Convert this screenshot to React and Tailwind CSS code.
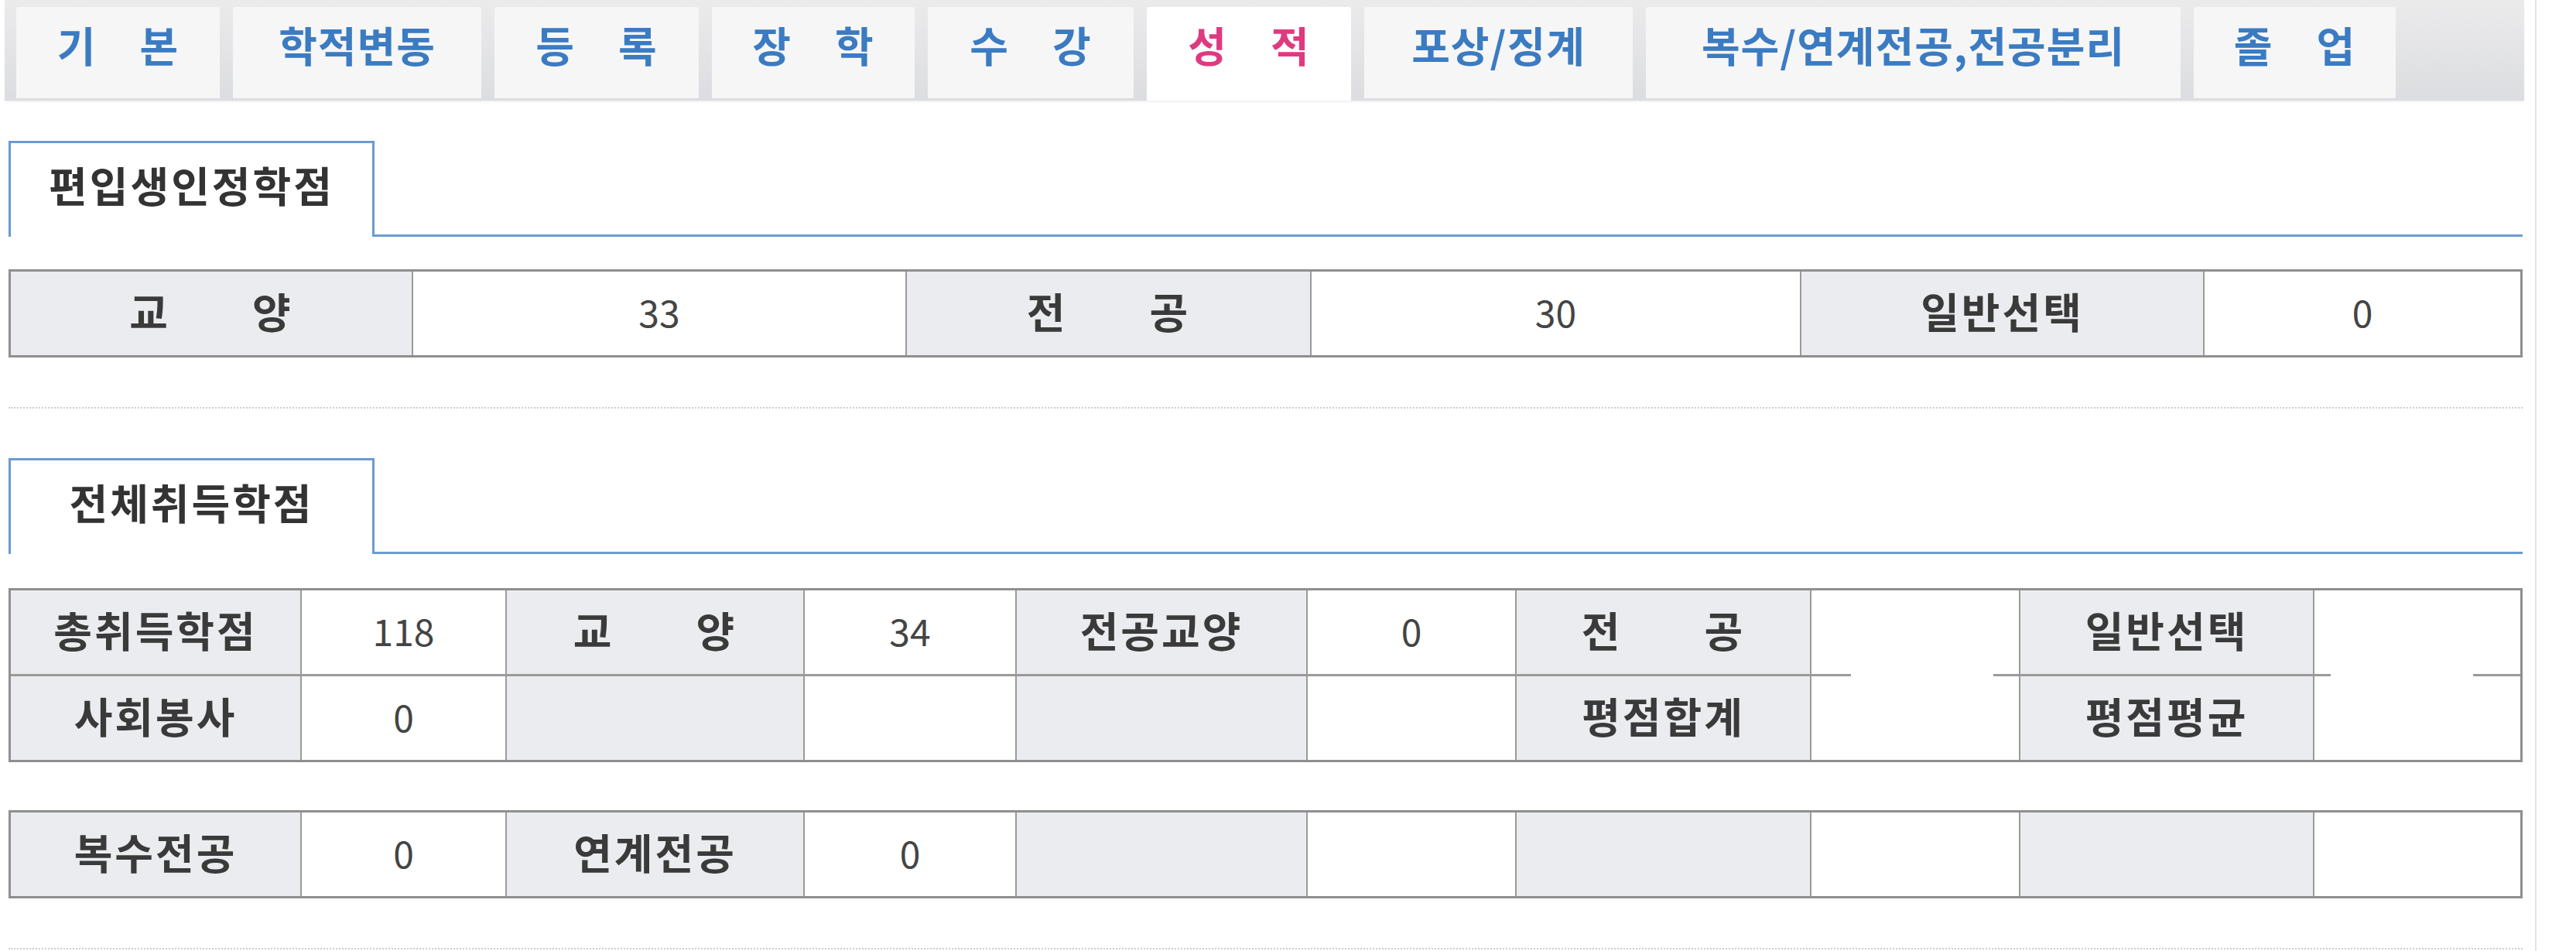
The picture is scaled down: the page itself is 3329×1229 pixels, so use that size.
import React from "react";

// 상단 탭 목록
const tabs = [
  { chars: ["기", "본"], w: "w-[263px]" },
  { chars: ["학적변동"], w: "w-[321px]" },
  { chars: ["등", "록"], w: "w-[264px]" },
  { chars: ["장", "학"], w: "w-[262px]" },
  { chars: ["수", "강"], w: "w-[266px]" },
  { chars: ["성", "적"], w: "w-[264px]", active: true },
  { chars: ["포상/징계"], w: "w-[347px]" },
  { chars: ["복수/연계전공,전공분리"], w: "w-[691px]" },
  { chars: ["졸", "업"], w: "w-[261px]" },
];

function Tab({ chars, w, active }) {
  return (
    <div
      className={`${w} flex shrink-0 justify-center gap-[56px] rounded-t-[3px] pt-[22px] text-[54px] font-bold leading-none tracking-[1px] ${
        active ? "h-[121px] bg-white text-[#de3a80]" : "h-[118px] bg-[#f6f6f6] text-[#3b7bc2]"
      }`}
    >
      {chars.map((c, i) => (
        <span key={i}>{c}</span>
      ))}
    </div>
  );
}

// 섹션 제목 (파란 테두리 탭)
function SectionTitle({ children }) {
  return (
    <div className="flex items-end">
      <div className="flex h-[124px] w-[473px] items-center justify-center border-x-[3px] border-t-[3px] border-[#6b9bd1] bg-white pb-[14px] text-[54px] font-bold leading-none tracking-[3px] text-[#333]">
        {children}
      </div>
      <div className="flex-1 border-b-[3px] border-[#6b9bd1]" />
    </div>
  );
}

function Head({ children, spaced }) {
  return (
    <div className="flex items-center justify-center bg-[#ebecef] pb-[6px] text-[54px] font-bold leading-none tracking-[3px] text-[#3a3a3a]">
      {spaced ? (
        <div className="flex gap-[106px]">
          {children.split(" ").map((c, i) => (
            <span key={i}>{c}</span>
          ))}
        </div>
      ) : (
        children
      )}
    </div>
  );
}

function Val({ children }) {
  return (
    <div className="flex items-center justify-center bg-white pb-[6px] text-[48px] leading-none text-[#444]">
      {children}
    </div>
  );
}

// 두 줄을 차지하는 빈 칸 (가운데 구분선이 일부만 보임)
function SplitCell({ left }) {
  return (
    <div className="row-span-2 flex flex-col bg-white">
      <div className="h-[108px]" />
      <div className="flex h-[3px]">
        <div className={`${left} h-full bg-[#9a9a9a]`} />
        <div className="h-full w-[184px] bg-white" />
        <div className="h-full flex-1 bg-[#9a9a9a]" />
      </div>
      <div className="flex-1" />
    </div>
  );
}

const grid10 =
  "grid grid-cols-[374px_263px_383px_272px_374px_268px_379px_268px_378px_266px] gap-x-[2px] gap-y-[3px] border-[3px] border-[#8f8f8f] bg-[#9a9a9a]";

export default function App() {
  return (
    <div className="min-h-[1229px] w-[3329px] bg-white font-['Noto_Sans_CJK_KR','Noto_Sans',sans-serif]">
      <div className="min-h-[1229px] w-[3278px] border-r-2 border-[#e3e3e3] pl-[6px] pr-[14px]">
        {/* 상단 탭바 */}
        <nav className="flex h-[130px] items-start gap-[17px] bg-linear-to-b from-[#ebebec] to-[#dcdde0] pl-[15px] pt-[9px] shadow-[0_2px_2px_rgba(0,0,0,0.06)]">
          {tabs.map((t, i) => (
            <Tab key={i} {...t} />
          ))}
        </nav>

        <div className="pl-[5px] pr-[2px]">
          {/* 편입생인정학점 */}
          <div className="mt-[52px]">
            <SectionTitle>편입생인정학점</SectionTitle>
          </div>
          <div className="mt-[42px] grid grid-cols-[518px_636px_521px_631px_519px_408px] grid-rows-[108px] gap-x-[2px] border-[3px] border-[#8f8f8f] bg-[#9a9a9a]">
            <Head spaced>교 양</Head>
            <Val>33</Val>
            <Head spaced>전 공</Head>
            <Val>30</Val>
            <Head>일반선택</Head>
            <Val>0</Val>
          </div>
          <div className="mt-[64px] border-t-2 border-dotted border-[#cdcdcd]" />

          {/* 전체취득학점 */}
          <div className="mt-[64px]">
            <SectionTitle>전체취득학점</SectionTitle>
          </div>
          <div className={`mt-[44px] grid-rows-[108px_108px] ${grid10}`}>
            <Head>총취득학점</Head>
            <Val>118</Val>
            <Head spaced>교 양</Head>
            <Val>34</Val>
            <Head>전공교양</Head>
            <Val>0</Val>
            <Head spaced>전 공</Head>
            <SplitCell left="w-[51px]" />
            <Head>일반선택</Head>
            <SplitCell left="w-[21px]" />
            <Head>사회봉사</Head>
            <Val>0</Val>
            <Head />
            <Val />
            <Head />
            <Val />
            <Head>평점합계</Head>
            <Head>평점평균</Head>
          </div>

          <div className={`mt-[62px] grid-rows-[108px] ${grid10}`}>
            <Head>복수전공</Head>
            <Val>0</Val>
            <Head>연계전공</Head>
            <Val>0</Val>
            <Head />
            <Val />
            <Head />
            <Val />
            <Head />
            <Val />
          </div>
          <div className="mt-[64px] border-t-2 border-dotted border-[#cdcdcd]" />
        </div>
      </div>
    </div>
  );
}
